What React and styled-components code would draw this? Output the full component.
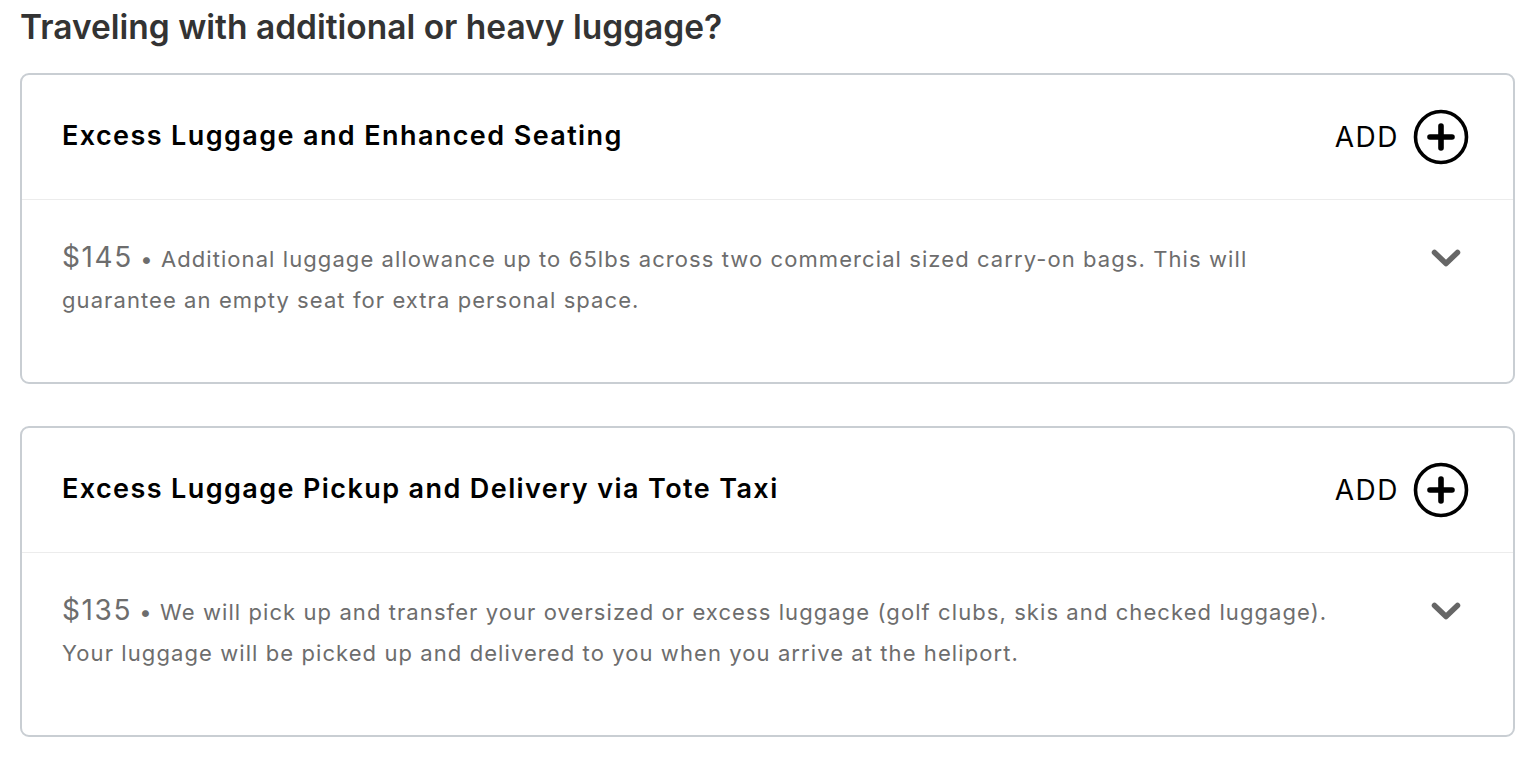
import React from "react";
import styled, { createGlobalStyle } from "styled-components";

const Global = createGlobalStyle`
  html, body { margin: 0; padding: 0; background: #ffffff; }
  body { font-family: "Inter", "Noto Sans", sans-serif; -webkit-font-smoothing: antialiased; }
`;

const Page = styled.div`
  padding: 0 23px 0 20px;
  width: 1495px;
`;

const Heading = styled.h2`
  margin: 0;
  height: 73px;
  padding-top: 7px;
  box-sizing: border-box;
  font-size: 33.5px;
  line-height: 40px;
  font-weight: 600;
  color: #333333;
`;

const List = styled.div`
  display: flex;
  flex-direction: column;
  gap: 42px;
`;

const Card = styled.section`
  border: 2px solid #c9ced3;
  border-radius: 9px;
  background: #fff;
`;

const Header = styled.div`
  height: 125px;
  display: flex;
  align-items: center;
  justify-content: space-between;
  padding: 0 44px 4px 40px;
  box-sizing: border-box;
  border-bottom: 1.5px solid #ececec;
`;

const Title = styled.h3`
  margin: 0;
  font-size: 27px;
  font-weight: 600;
  letter-spacing: 1.4px;
  color: #000;
`;

const AddButton = styled.button`
  display: flex;
  align-items: center;
  gap: 14px;
  border: none;
  background: none;
  padding: 0;
  margin-top: 4px;
  font-family: inherit;
  font-size: 28px;
  font-weight: 400;
  letter-spacing: 1.5px;
  color: #000;
  cursor: pointer;
`;

const Body = styled.div`
  display: flex;
  align-items: flex-start;
  justify-content: space-between;
  padding: 37px 52px 61px 40px;
`;

const Description = styled.p`
  margin: 0;
  max-width: 1285px;
  font-size: 22px;
  line-height: 41px;
  letter-spacing: 1.08px;
  color: #6d6d6d;
`;

const Price = styled.span`
  font-size: 28px;
  letter-spacing: 1.6px;
`;

const Chevron = styled.svg`
  flex: none;
  margin-top: 12px;
`;

const PlusCircle = () => (
  <svg width="56" height="56" viewBox="0 0 56 56" aria-hidden="true">
    <circle cx="28" cy="28" r="25.5" fill="none" stroke="#000" strokeWidth="3.6" />
    <path d="M28 17 V39 M17 28 H39" stroke="#000" strokeWidth="5.6" strokeLinecap="round" />
  </svg>
);

const items = [
  {
    title: "Excess Luggage and Enhanced Seating",
    price: "$145",
    text: "Additional luggage allowance up to 65lbs across two commercial sized carry-on bags. This will guarantee an empty seat for extra personal space.",
  },
  {
    title: "Excess Luggage Pickup and Delivery via Tote Taxi",
    price: "$135",
    text: "We will pick up and transfer your oversized or excess luggage (golf clubs, skis and checked luggage). Your luggage will be picked up and delivered to you when you arrive at the heliport.",
  },
];

export default function App() {
  return (
    <>
      <Global />
      <Page>
        <Heading>Traveling with additional or heavy luggage?</Heading>
        <List>
          {items.map((it) => (
            <Card key={it.title}>
              <Header>
                <Title>{it.title}</Title>
                <AddButton>
                  ADD
                  <PlusCircle />
                </AddButton>
              </Header>
              <Body>
                <Description>
                  <Price>{it.price}</Price> • {it.text}
                </Description>
                <Chevron width="30" height="19" viewBox="0 0 30 19" aria-hidden="true">
                  <polyline points="3.5,3.5 15,14.5 26.5,3.5" fill="none" stroke="#666" strokeWidth="5.5" strokeLinecap="round" strokeLinejoin="round" />
                </Chevron>
              </Body>
            </Card>
          ))}
        </List>
      </Page>
    </>
  );
}
